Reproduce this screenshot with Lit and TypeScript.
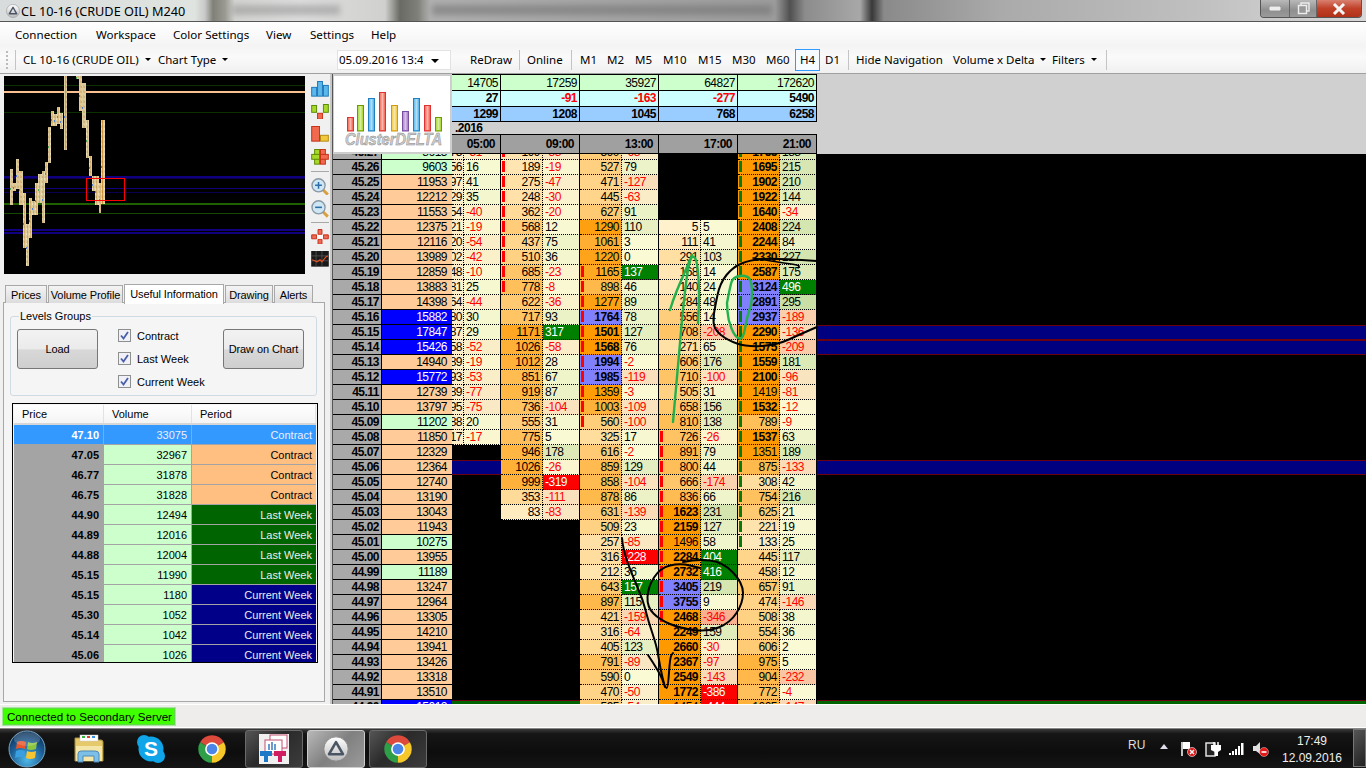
import { LitElement, html, css, svg } from "lit";
import { customElement } from "lit/decorators.js";

const RAW = `45.27|8613|75 -51|199 -88|590 -68|-|1755 188
45.26|9603|56 16|189 -19|527 79|-|1695 215
45.25|11953|97 41|275 -47|471 -127|-|1902 210
45.24|12212|29 35|248 -30|445 -63|-|1922 144
45.23|11553|54 -40|362 -20|627 91|-|1640 -34
45.22|12375|21 -19|568 12|1290 110|5 5|2408 224
45.21|12116|20 -54|437 75|1061 3|111 41|2244 84
45.20|13989|02 -42|510 36|1220 0|291 103|2330 227
45.19|12859|48 -10|685 -23|1165 137g|168 14|2587 175
45.18|13883|81 25|778 -8|898 46|140 24|3124 496g
45.17|14398|64 -44|622 -36|1277 89|284 48|2891 295
45.16|15882|80 30|717 93|1764 78|556 14|2937 -189
45.15|17847|87 29|1171 317g|1501 127|708 -208|2290 -136
45.14|15426|58 -52|1026 -58|1568 76|271 65|1575 -209
45.13|14940|89 -19|1012 28|1994 -2|606 176|1559 181
45.12|15772|93 -53|851 67|1985 -119|710 -100|2100 -96
45.11|12739|89 -77|919 87|1359 -3|505 31|1419 -81
45.10|13797|95 -75|736 -104|1003 -109|658 156|1532 -12
45.09|11202|88 20|555 31|560 -100|810 138|789 -9
45.08|11850|17 -17|775 5|325 17|726 -26|1537 63
45.07|12329|-|946 178|616 -2|891 79|1351 189
45.06|12364|-|1026 -26|859 129|800 44|875 -133
45.05|12740|-|999 -319r|858 -104|666 -174|308 42
45.04|13190|-|353 -111|878 86|836 66|754 216
45.03|13043|-|83 -83|631 -139|1623 231|625 21
45.02|11943|-|-|509 23|2159 127|221 19
45.01|10275|-|-|257 -85|1496 58|133 25
45.00|13955|-|-|316 -228r|2284 404g|445 117
44.99|11189|-|-|212 36|2732 416g|458 12
44.98|13247|-|-|643 157g|3405 219|657 91
44.97|12964|-|-|897 115|3755 9|474 -146
44.96|13305|-|-|421 -159|2468 -346|508 38
44.95|14210|-|-|316 -64|2249 159|554 36
44.94|13941|-|-|405 123|2660 -30|606 2
44.93|13426|-|-|791 -89|2367 -97|975 5
44.92|13318|-|-|590 0|2549 -143|904 -232
44.91|13510|-|-|470 -50|1772 -386r|772 -4
44.90|15012|-|-|595 -54|1454 -444r|1005 -147`;

const ROWS = RAW.split("\n").map((l) => l.split("|"));

const mix = (a: number[], b: number[], t: number) =>
  `rgb(${a.map((v, i) => Math.round(v + (b[i] - v) * t)).join(",")})`;

const volBg = (v: number) => mix([255, 241, 205], [255, 153, 0], Math.min(1, v / 1400));
const deltaBg = (d: number) =>
  d >= 0
    ? mix([250, 250, 212], [196, 220, 160], Math.min(1, d / 330))
    : mix([250, 250, 212], [248, 176, 144], Math.min(1, -d / 330));

const BLUE = [0, 0, 0, 1700, 3000, 2800];

const LEVELS: Record<string, string> = { "45.15": "lv-n", "45.14": "lv-n", "45.06": "lv-n", "44.90": "lv-g" };

function mark(col: number, p: number) {
  if (col === 2 && p >= 45.18) return "m-r";
  if (col === 3 && p <= 45.19 && p >= 45.09) return "m-r";
  if (col === 4 && p <= 45.08 && p >= 44.96) return "m-r";
  if (col === 5 && p >= 45.01) return "m-g";
  return "";
}

const HEAD: [string, string][] = [
  ["14705", "27"], ["17259", "-91"], ["35927", "-163"], ["64827", "-277"], ["172620", "5490"],
];
const HEAD3 = ["1299", "1208", "1045", "768", "6258"];
const TIMES = ["05:00", "09:00", "13:00", "17:00", "21:00"];

const LEVELS_TABLE = [
  ["47.10", "33075", "Contract", "sel"],
  ["47.05", "32967", "Contract", "c"],
  ["46.77", "31878", "Contract", "c"],
  ["46.75", "31828", "Contract", "c"],
  ["44.90", "12494", "Last Week", "l"],
  ["44.89", "12016", "Last Week", "l"],
  ["44.88", "12004", "Last Week", "l"],
  ["45.15", "11990", "Last Week", "l"],
  ["45.15", "1180", "Current Week", "w"],
  ["45.30", "1052", "Current Week", "w"],
  ["45.14", "1042", "Current Week", "w"],
  ["45.06", "1026", "Current Week", "w"],
];

const MENU: [string, number][] = [["Connection", 81], ["Workspace", 77], ["Color Settings", 93], ["View", 44], ["Settings", 61], ["Help", 40]];
const TB: [string, number][] = [
  ["ReDraw", 49], ["|", 8], ["Online", 44], ["|", 9], ["M1", 27], ["M2", 28], ["M5", 28], ["M10", 35],
  ["M15", 34], ["M30", 34], ["M60", 29],
];

const BARS = [
  [10, 13, 169, 205], [13, 16, 183, 191], [16, 19, 159, 189], [19, 23, 171, 205], [23, 26, 193, 248],
  [26, 29, 224, 266], [29, 32, 198, 238], [32, 35, 201, 215], [35, 38, 183, 215], [38, 42, 174, 203],
  [42, 45, 171, 223], [45, 48, 162, 183], [48, 51, 127, 163], [51, 54, 111, 126], [54, 57, 114, 126],
  [57, 60, 107, 124], [60, 63, 113, 129], [64, 67, 76, 150], [76, 79, 76, 79], [79, 82, 76, 111],
  [82, 86, 83, 128], [86, 89, 120, 158], [89, 92, 156, 176], [92, 95, 176, 191], [95, 99, 176, 205],
  [99, 101, 183, 213], [101, 105, 120, 204],
];

const LINES: [number, string, number][] = [
  [85, "#0c3000", 1], [91, "#f8c090", 2], [112, "#0c3000", 1], [176, "#100080", 2], [178, "#0a0050", 1],
  [188, "#100080", 1], [192, "#0a0050", 1], [203, "#206000", 2], [213, "#154a00", 1], [229, "#100080", 2], [232, "#100080", 2],
];

const LOGO: [number, number, string, string][] = [
  [347, 117, "#f4604c", "#d33"], [357, 105, "#a6d82a", "#6a9a00"], [368, 98, "#4fb4ec", "#1e80c0"],
  [379, 92, "#f4604c", "#d33"], [391, 105, "#f2c83c", "#cc9c10"], [402, 111, "#a878c8", "#7a4ea0"],
  [413, 98, "#4fb4ec", "#1e80c0"], [424, 105, "#f4604c", "#d33"], [435, 117, "#a6d82a", "#6a9a00"],
];

const chrome = () => html`<svg class="chrome" viewBox="0 0 48 48">
  <path d="M24 24L43.05 13A22 22 0 0 0 4.95 13Z" fill="#dd4a3c"/>
  <path d="M24 24L4.95 13A22 22 0 0 0 24 46Z" fill="#2f9e48"/>
  <path d="M24 24L24 46A22 22 0 0 0 43.05 13Z" fill="#f6c728"/>
  <circle cx="24" cy="24" r="11" fill="#fff"/><circle cx="24" cy="24" r="8.5" fill="#4a86e8"/>
</svg>`;

const triangleIcon = (cls: string) => html`<svg class=${cls} viewBox="0 0 30 30">
  <defs><linearGradient id="tg" x1="0" y1="0" x2="0" y2="1"><stop offset="0" stop-color="#fff"/><stop offset="1" stop-color="#bbb"/></linearGradient></defs>
  <circle cx="15" cy="15" r="14" fill="url(#tg)" stroke="#888"/>
  <path d="M15 7L23 21H7Z" fill="none" stroke="#4a5564" stroke-width="3" stroke-linejoin="round"/>
</svg>`;

const smooth = (pts: string) => {
  const p = pts.split(" ").map((s) => s.split(",").map(Number));
  let d = `M${p[0][0]} ${p[0][1]}`;
  for (let i = 1; i < p.length - 1; i++) {
    const mx = (p[i][0] + p[i + 1][0]) / 2;
    const my = (p[i][1] + p[i + 1][1]) / 2;
    d += `Q${p[i][0]} ${p[i][1]} ${mx} ${my}`;
  }
  const l = p[p.length - 1];
  return d + `L${l[0]} ${l[1]}`;
};

@customElement("app-root")
export class AppRoot extends LitElement {
  static styles = css`
    :host { display: block; width: 1366px; height: 768px; overflow: hidden; font-family: "Liberation Sans", Arial, sans-serif; font-size: 11px; color: #000; }
    .app { display: flex; flex-direction: column; width: 1366px; height: 768px; background: #f0f0f0; }

    .title { height: 22px; box-sizing: border-box; border-bottom: 1px solid #555; display: flex; align-items: center; position: relative; overflow: hidden;
      background: linear-gradient(90deg, #d8dcdc 0, #dfe4e0 195px, #c8c8c8 205px, #808078 213px, #9a9a92 225px, #d4d4d2 235px, #dedede 300px, #d0d0ce 385px, #6a6a64 400px, #80807a 418px, #b0b0b0 430px, #a8a8a8 560px, #9c9c9c 775px, #505050 790px, #8c8c8c 805px, #a8a8a8 860px, #383838 872px, #8a8a8a 884px, #aaaaaa 1000px, #c0c0c0 1200px, #d8d8d8 1366px); }
    .title svg.ti { width: 14px; height: 14px; margin-left: 6px; flex: none; }
    .title .tt { padding-left: 1px; font: 12.7px "Noto Sans", sans-serif; color: #000; white-space: nowrap; position: relative; }
    .haze { position: absolute; top: 5px; height: 10px; filter: blur(3px); background: #8f8f8f; opacity: .55; }
    .hz1 { left: 232px; width: 108px; }
    .hz2 { left: 432px; width: 340px; background: #6e6e6e; }
    .winbtns { position: absolute; right: 4px; top: 0; display: flex; height: 17px; border: 1px solid #555; border-top: 0; border-radius: 0 0 4px 4px; overflow: hidden; background: #9aa; }
    .winbtns div { display: flex; align-items: center; justify-content: center; height: 17px; border-right: 1px solid #666; }
    .wb-min { width: 28px; background: linear-gradient(#b9b9b9, #8f8f8f 60%, #9a9a9a); }
    .wb-res { width: 26px; background: linear-gradient(#b9b9b9, #8f8f8f 60%, #9a9a9a); }
    .wb-cl { width: 44px; background: linear-gradient(#d88070, #c04028 50%, #b03018); border-right: 0 !important; }

    .menu { height: 24px; display: flex; align-items: center; padding-left: 15px; background: linear-gradient(#fff, #f4f4f4); font: 11.6px "Noto Sans", sans-serif; }
    .menu span { display: block; }

    .toolbar { height: 28px; display: flex; align-items: center; background: linear-gradient(#f4f4f4, #fafafa 40%, #f0f0f0); font: 11.5px "Noto Sans", sans-serif; border-bottom: 1px solid #a0a0a0; box-sizing: border-box; padding-left: 6px; white-space: nowrap; }
    .grip { width: 3px; height: 18px; border-left: 2px dotted #bbb; box-sizing: border-box; }
    .sep { width: 1px; height: 20px; background: #c4c4c4; }
    .grip + .sep { margin: 0 7px 0 6px; }
    .ti-btn { display: flex; align-items: center; gap: 6px; box-sizing: border-box; height: 22px; }
    .car { width: 0; height: 0; border: 3px solid transparent; border-top: 3px solid #000; border-bottom: 0; }
    .date { box-sizing: border-box; width: 114px; height: 20px; background: #fff; border: 1px solid #e2e2e2; display: flex; align-items: center; position: relative; padding-left: 1px; overflow: hidden; }
    .date .dt { width: 84px; overflow: hidden; }
    .date .car { border-width: 4px 4px 0; position: absolute; right: 11px; top: 8px; }
    .tsep { box-sizing: border-box; display: flex; }
    .tsep i { display: block; width: 1px; height: 20px; background: #c4c4c4; }
    .h4 { box-sizing: border-box; width: 25px; height: 22px; border: 1px solid #3399ff; display: flex; align-items: center; justify-content: center; background: #f6fbff; }

    .main { flex: 1; display: flex; min-height: 0; height: 630px; }
    .left { width: 330px; flex: none; display: flex; flex-direction: column; padding-top: 2px; box-sizing: border-box; }
    .topleft { display: flex; height: 198px; padding-left: 4px; }
    .mini { width: 301px; height: 198px; display: block; background: #000; }
    .icons { display: flex; flex-direction: column; padding: 5px 0 0 6px; width: 19px; }
    .icons .ic { width: 18px; height: 16px; margin-bottom: 7px; display: block; }
    .icons .zi { width: 18px; height: 18px; margin-bottom: 5px; display: block; }
    .icons .dv { width: 18px; height: 1px; background: #a8a8a8; margin: -1px 0 6px; }

    .tabs { display: flex; margin: 9px 0 0 5px; height: 20px; align-items: flex-end; gap: 1px; position: relative; z-index: 1; }
    .tab { box-sizing: border-box; height: 18px; border: 1px solid #a8a8a8; border-bottom: 0; background: linear-gradient(#f4f4f4, #dcdcdc); display: flex; align-items: center; justify-content: center; font-size: 11px; letter-spacing: -.1px; padding-top: 1px; white-space: nowrap; }
    .tab.on { height: 20px; background: #fff; padding: 0 0 2px; margin-bottom: -1px; }
    .panel { box-sizing: border-box; margin: -1px 0 0 3px; width: 322px; height: 400px; border: 1px solid #a8a8a8; background: #f5f5f5; padding: 13px 6px 0; }
    .group { position: relative; box-sizing: border-box; width: 307px; height: 80px; border: 1px solid #cfdbe2; border-radius: 3px; display: flex; padding: 12px 0 0 6px; }
    .legend { position: absolute; left: 8px; top: -7px; background: #f5f5f5; padding: 0 1px; font-size: 11px; }
    .btn { box-sizing: border-box; width: 81px; height: 40px; border: 1px solid #777; border-radius: 3px; background: linear-gradient(#f2f2f2, #ebebeb 50%, #d8d8d8 52%, #cfcfcf); display: flex; align-items: center; justify-content: center; font-size: 11px; letter-spacing: -.1px; flex: none; }
    .checks { display: flex; flex-direction: column; gap: 10px; margin: 0 0 0 20px; width: 105px; }
    .chk { display: flex; align-items: center; gap: 6px; height: 13px; font-size: 11px; }
    .chk svg { width: 13px; height: 13px; flex: none; }

    .lt { box-sizing: border-box; width: 306px; height: 260px; margin: 7px 0 0 2px; border: 1px solid #000; padding: 1px; background: #f5f5f5; overflow: hidden; }
    .lh { display: flex; height: 20px; background: linear-gradient(#fff, #f4f4f4); border-bottom: 2px solid #d6d6d6; box-sizing: border-box; font-size: 11px; }
    .lh div { box-sizing: border-box; padding: 3px 0 0 8px; border-right: 1px solid #e2e2e2; }
    .lr { display: flex; height: 20px; box-sizing: border-box; border-bottom: 1px solid #a4a4a4; align-items: center; text-align: right; font-size: 11px; }
    .lr div { box-sizing: border-box; height: 19px; line-height: 20px; padding-right: 4px; border-right: 1px solid #a4a4a4; }
    .c1 { width: 90px; } .c2 { width: 88px; } .c3 { width: 124px; }
    .lr .c1 { background: #a4a4a4; font-weight: 700; padding-right: 4px; }
    .lr .c2 { background: #ccffcc; }
    .lr .c3 { border-right: 0; }
    .lr.c .c3 { background: #ffbf80; }
    .lr.l .c3 { background: #006400; color: #eee; }
    .lr.w .c3 { background: #000088; color: #eee; }
    .lr.sel div { background: #3399ff; color: #eef; }
    .lr.sel .c1 { color: #fff; }

    .split { width: 3px; flex: none; background: #c8c8c8; border-right: 1px solid #555; box-sizing: border-box; }
    .chart { flex: 1; position: relative; background: #000; overflow: hidden; font-size: 12px; letter-spacing: -.5px; }
    .hd { background: #d0d0d0; height: 80px; }
    .hr { display: flex; padding-left: 119px; }
    .hr > div { box-sizing: border-box; text-align: right; padding-right: 2px; border-right: 1px solid #000; border-bottom: 1px solid #000; flex: none; }
    .hr > div.g1 { width: 49px; } .hr > div.g { width: 79px; }
    .r1 { height: 17px; } .r1 > div { background: #ccffcc; height: 17px; line-height: 16px; border-top: 1px solid #000; }
    .r2 { height: 16px; } .r2 > div { background: #ccffff; height: 16px; line-height: 15px; font-weight: 700; }
    .r3 { height: 15px; } .r3 > div { background: #99ccff; height: 15px; line-height: 14px; font-weight: 700; }
    .r4 { height: 12px; font-weight: 700; line-height: 12px; padding-left: 122px; }
    .r5 { height: 20px; } .r5 > div { background: #a0a0a0; height: 20px; line-height: 18px; font-weight: 700; border-top: 1px solid #000; padding-right: 5px; }
    .neg { color: #f00; }

    .rows { height: 550px; overflow: hidden; }
    .row { display: flex; height: 15px; background: #000; width: 100%; }
    .row:first-child { margin-top: -9px; }
    .row.lv-n { background: #000080; box-shadow: inset 0 1px #6c0010, inset 0 -1px #6c0010; }
    .row.lv-g { background: #006400; box-shadow: inset 0 1px #6c0010; }
    .cell { box-sizing: border-box; height: 15px; line-height: 15px; display: flex; white-space: nowrap; overflow: hidden; flex: none; }
    .price { width: 49px; justify-content: flex-end; background: #a9a9a9; font-weight: 700; border-bottom: 1px solid #000; border-right: 1px solid #000; padding-right: 2px; }
    .vol { width: 70px; justify-content: flex-end; border-bottom: 1px solid #000; padding-right: 5px; }
    .v-g { background: #ccffcc; } .v-p { background: #ffcc99; } .v-b { background: #0000ff; color: #fff; }
    .cv { justify-content: flex-end; padding-right: 2px; border-bottom: 1px dotted #000; border-right: 1px dotted #000; position: relative; }
    .cd { padding-left: 2px; border-bottom: 1px dotted #000; border-right: 1px solid #000; }
    .w12 { width: 12px; padding-right: 1px; } .w37 { width: 37px; } .w42 { width: 42px; }
    .emp { height: 15px; flex: none; }
    .bold { font-weight: 700; } .red { color: #f00; }
    .hi { background: #8080ff !important; }
    .dg { background: #008000 !important; color: #fff; }
    .dr { background: #ff0000 !important; color: #fff; }
    .cv.m-r::before, .cv.m-g::before { content: ""; position: absolute; left: 1px; top: 1px; height: 11px; width: 3px; }
    .cv.m-r::before { background: #f00; } .cv.m-g::before { background: #0a7a10; }

    .logo { position: absolute; left: 0; top: 1px; width: 118px; height: 78px; background: #fff; border: 1px solid #ccc; box-sizing: border-box; }
    .logo svg { display: block; width: 116px; height: 76px; letter-spacing: 0; }
    .ink { position: absolute; left: 0; top: 0; width: 1033px; height: 630px; pointer-events: none; }

    .status { height: 24px; background: #efedec; border-top: 1px solid #fff; box-sizing: border-box; padding: 2px 0 0 2px; border-bottom: 1px solid #fff; }
    .conn { box-sizing: border-box; width: 174px; height: 19px; background: #40ff00; border: 1px solid #a4e89a; outline: 1px solid #60d848; outline-offset: -2px; padding-left: 4px; line-height: 17px; font-size: 11.6px; white-space: nowrap; }

    .task { height: 40px; background: linear-gradient(#3a3a3a, #161616 12%, #0d0d0d 60%, #151515); display: flex; align-items: center; position: relative; color: #ddd; border-top: 1px solid #888; box-sizing: border-box; }
    .orb { width: 38px; height: 38px; margin-left: 8px; flex: none; }
    .folder { width: 32px; height: 29px; margin-left: 27px; flex: none; }
    .skype { width: 30px; height: 30px; margin-left: 31px; flex: none; }
    svg.chrome { width: 30px; height: 30px; flex: none; display: block; }
    .pin { margin-left: 31px; }
    .tb { box-sizing: border-box; width: 58px; height: 38px; border: 1px solid #6a6a6a; border-radius: 3px; background: linear-gradient(135deg, #555, #2a2a2a 45%, #3c3c3c); display: flex; align-items: center; justify-content: center; flex: none; margin-left: 4px; }
    .tb.first { margin-left: 18px; }
    .tb.act { background: linear-gradient(135deg, #b8b8b8, #808080 50%, #9a9a9a); border-color: #ccc; margin-left: 4px; }
    .tb svg.app { width: 30px; height: 30px; }
    .tb svg.tri { width: 26px; height: 26px; }
    .clock { position: absolute; left: 1272px; top: 4px; width: 80px; text-align: center; font-size: 12px; line-height: 17px; color: #eee; }
    .ru { position: absolute; left: 1128px; top: 9px; font-size: 12px; }
    .showd { position: absolute; right: 0; top: 0; width: 13px; height: 38px; border: 1px solid #777; background: linear-gradient(135deg, #555, #222); box-sizing: border-box; }
    .tic { position: absolute; top: 12px; display: block; }
  `;

  private miniChart() {
    return svg`
      <defs>
        <pattern id="st" width="3" height="5" patternUnits="userSpaceOnUse">
          <rect width="3" height="5" fill="#dccb9c"/>
          <rect x="0" y="1" width="1" height="2" fill="#cfb078"/>
          <rect x="2" y="3" width="1" height="2" fill="#ecdfba"/>
        </pattern>
      </defs>
      ${LINES.map(([y, c, h]) => svg`<rect x="4" y=${y} width="301" height=${h} fill=${c}/>`)}
      ${BARS.map(([a, b, t, e], i) => svg`
        <rect x=${a} y=${t} width=${b - a} height=${e - t} fill="url(#st)"/>
        <rect x=${a + 1} y=${t} width="1" height=${e - t} fill="#c87a10" opacity=${e - t > 60 ? 0.6 : 0.25}/>
        <rect x=${a} y=${t + ((e - t) * 0.55 | 0)} width="1" height="2" fill=${i % 3 ? "#5880c8" : "#50a050"}/>
      `)}
      <rect x="86.5" y="178.5" width="38" height="22" fill="none" stroke="#f00"/>
    `;
  }

  private sideIcons() {
    const bar = (x: number, y: number, w: number, h: number, f: string, s: string) =>
      svg`<rect x=${x + 0.5} y=${y + 0.5} width=${w - 1} height=${h - 1} fill=${f} stroke=${s}/>`;
    return html`
      <svg class="ic" viewBox="0 0 18 16">${bar(0, 6, 6, 10, "#5cb8ec", "#1c78b8")}${bar(6, 0, 6, 16, "#5cb8ec", "#1c78b8")}${bar(12, 4, 6, 12, "#5cb8ec", "#1c78b8")}</svg>
      <svg class="ic" viewBox="0 0 18 16">${bar(0, 1, 6, 8, "#a6d82a", "#5a8a00")}${bar(12, 0, 6, 9, "#a6d82a", "#5a8a00")}${bar(6, 9, 6, 7, "#f06a50", "#c83018")}</svg>
      <svg class="ic" viewBox="0 0 18 16">${bar(0, 0, 9, 16, "#f06a50", "#c83018")}${bar(9, 9, 9, 7, "#f2c83c", "#b48a10")}</svg>
      <svg class="ic" viewBox="0 0 18 16">${bar(3, 0, 6, 16, "#a6d82a", "#5a8a00")}${bar(0, 5, 9, 6, "#a6d82a", "#5a8a00")}${bar(9, 0, 6, 16, "#f06a50", "#c83018")}${bar(9, 5, 9, 6, "#f06a50", "#c83018")}</svg>
      <div class="dv"></div>
      ${[true, false].map((plus) => html`<svg class="zi" viewBox="0 0 18 18">
        <path d="M12 12L17 17" stroke="#d8a040" stroke-width="3"/>
        <circle cx="7.5" cy="7.5" r="6.7" fill="#cfe6f4" stroke="#8898a4" stroke-width="1.4"/>
        <path d=${plus ? "M4 7.5H11M7.5 4V11" : "M4 7.5H11"} stroke="#2c6fa8" stroke-width="1.6"/>
      </svg>`)}
      <div class="dv"></div>
      <svg class="ic" viewBox="0 0 18 16">
        <path d="M7 .5H11V5.5H7ZM7 10.5H11V15.5H7ZM.5 6H5.5V10H.5ZM12.5 6H17.5V10H12.5Z" fill="#ee6a5a" stroke="#c83018"/>
        <rect x="6" y="6" width="6" height="4" fill="#fff"/>
      </svg>
      <svg class="ic" viewBox="0 0 18 16">
        <rect width="18" height="16" fill="#1a1a1a"/>
        <path d="M0 5H18M0 10H18M5 0V16M11 0V16" stroke="#555" stroke-width=".8"/>
        <path d="M1 9L6 11L9 9L11 11L15 6L17 5" fill="none" stroke="#e05020" stroke-width="1.2"/>
      </svg>`;
  }

  private logo() {
    return html`<svg viewBox="334 76 116 76">
      <defs><linearGradient id="gl" x1="0" x2="1" y1="0" y2="0"><stop offset="0" stop-color="#fff" stop-opacity=".1"/><stop offset=".5" stop-color="#fff" stop-opacity=".55"/><stop offset="1" stop-color="#fff" stop-opacity="0"/></linearGradient></defs>
      ${LOGO.map(([x, y, f, s]) => svg`
        <rect x=${x + 0.5} y=${y + 0.5} width="6" height=${130.5 - y} fill=${f} stroke=${s}/>
        <rect x=${x + 1} y=${y + 1} width="5" height=${129 - y} fill="url(#gl)"/>`)}
      <text x="345" y="145" font-family="Liberation Sans, sans-serif" font-weight="700" font-style="italic" font-size="16.5" fill="#cfcfcf" stroke="#8a8a8a" stroke-width=".5" textLength="97" lengthAdjust="spacingAndGlyphs">ClusterDELTA</text>
    </svg>`;
  }

  private ink() {
    const k = "#000";
    const g = "#22b14c";
    const line = (p: string, c: string, w = 2) =>
      svg`<path d=${smooth(p)} fill="none" stroke=${c} stroke-width=${w} stroke-linejoin="round" stroke-linecap="round"/>`;
    return html`<svg class="ink" viewBox="333 74 1033 630">
      ${line("670,310 673,300 680,283 687,267 692,255 697,260 699,285 699,303 698,323", g, 2.4)}
      ${line("673,422 677,377 680,343 683,308 688,267 692,255", g, 2.4)}
      ${line("727,303 730,287 733,277 747,275 752,283 752,303 747,317 743,340 735,337 728,320 727,303", g, 2.4)}
      ${line("817,261 773,258 750,260 733,267 720,283 715,307 713,320 715,330 727,340 747,347 777,345 803,333 817,327", k)}
      ${line("753,258 775,262 800,265 798,268", k, 1.5)}
      ${line("683,562 697,559 723,562 743,583 743,603 730,623 707,632 680,628 660,620 647,607 648,587 660,568 680,563 700,568", k)}
      ${line("622,538 623,550 633,577 643,600 648,620 657,647 660,667 665,688 668,688 670,657 673,653", k)}
      ${line("648,655 660,673 665,687", k)}
    </svg>`;
  }

  private table() {
    return html`<div class="rows">
      ${ROWS.map((r) => {
        const p = parseFloat(r[0]);
        const v = +r[1];
        const vc = v < 11500 ? "v-g" : v >= 15000 ? "v-b" : "v-p";
        return html`<div class="row ${LEVELS[r[0]] ?? ""}">
          <div class="cell price">${r[0]}</div>
          <div class="cell vol ${vc}">${r[1]}</div>
          ${r.slice(2).map((c, i) => {
            const col = i + 1;
            if (c === "-") return html`<div class="emp" style="width:${col === 1 ? 49 : 79}px"></div>`;
            const [a, b] = c.split(" ");
            const d = parseInt(b);
            const fl = b.endsWith("g") ? "dg" : b.endsWith("r") ? "dr" : "";
            const txt = b.replace(/[gr]$/, "");
            if (col === 1) {
              return html`<div class="cell cv w12" style="background:${mix([255, 241, 205], [255, 220, 150], 0.1)}">${a}</div>
                <div class="cell cd w37 ${d < 0 ? "red" : ""}" style="background:${deltaBg(d)}">${txt}</div>`;
            }
            const n = +a;
            return html`<div class="cell cv w42 ${mark(col, p)} ${n >= 1500 ? "bold" : ""} ${n >= BLUE[col] && BLUE[col] ? "hi" : ""}" style="background:${volBg(n)}">${a}</div>
              <div class="cell cd w37 ${fl} ${d < 0 && !fl ? "red" : ""}" style="background:${deltaBg(d)}">${txt}</div>`;
          })}
        </div>`;
      })}
    </div>`;
  }

  private taskbar() {
    return html`<div class="task">
      <svg class="orb" viewBox="0 0 38 38">
        <defs>
          <radialGradient id="ob" cx=".5" cy=".8" r=".8"><stop offset="0" stop-color="#4fb8e8"/><stop offset=".6" stop-color="#1a5c94"/><stop offset="1" stop-color="#0c2c50"/></radialGradient>
        </defs>
        <circle cx="19" cy="19" r="18" fill="url(#ob)" stroke="#7aa6c4"/>
        <path d="M9 12Q13 10 18 12L17 19Q12 17 8 19Z" fill="#e8562a"/>
        <path d="M20 12Q24 14 29 12L28 19Q23 21 19 19Z" fill="#8cc63f"/>
        <path d="M8 21Q12 19 17 21L16 28Q11 26 7 28Z" fill="#3a9fe0"/>
        <path d="M19 21Q23 23 28 21L27 28Q22 30 18 28Z" fill="#f7c531"/>
        <ellipse cx="19" cy="9" rx="13" ry="7" fill="#fff" opacity=".18"/>
      </svg>
      <svg class="folder" viewBox="0 0 32 29">
        <path d="M2 4H10L12 6H28Q30 6 30 8V27H2Z" fill="#e6c96a" stroke="#a88f40"/>
        <rect x="7" y="1" width="18" height="6" fill="#fff" stroke="#ccc" stroke-width=".5"/>
        <rect x="9" y="2" width="3" height="2" fill="#3cb043"/><rect x="14" y="2" width="3" height="2" fill="#e04030"/><rect x="19" y="2" width="3" height="2" fill="#3a8fe0"/>
        <path d="M3 12H29V27H3Z" fill="#f4e6a8"/>
        <path d="M5 28V20Q5 17 8 17H22Q26 17 26 20V28H21V22H10V28Z" fill="#7cc0e8" stroke="#4c88b8"/>
      </svg>
      <svg class="skype" viewBox="0 0 30 30">
        <circle cx="15" cy="15" r="12.5" fill="#0fa5e8"/><circle cx="8" cy="8" r="7" fill="#0fa5e8"/><circle cx="22" cy="22" r="7" fill="#0fa5e8"/>
        <text x="15" y="22" text-anchor="middle" font-family="Liberation Sans, sans-serif" font-weight="700" font-size="21" fill="#fff">S</text>
      </svg>
      <div class="pin">${chrome()}</div>
      <div class="tb first">
        <svg class="app" viewBox="0 0 30 30">
          <rect x="11" y="1" width="17" height="13" fill="#fff" stroke="#c05070"/><rect x="6" y="6" width="17" height="14" fill="#fff" stroke="#c05070"/>
          <rect x="9" y="10" width="2" height="6" fill="#6a9ad0"/><rect x="12" y="8" width="2" height="8" fill="#6a9ad0"/><rect x="15" y="10" width="2" height="6" fill="#6a9ad0"/>
          <path d="M1 17H13V22H9V28H5V22H1Z" fill="#1e78c8"/><path d="M15 17H27V22H23V28H19V22H15Z" fill="#d01c60"/>
        </svg>
      </div>
      <div class="tb act">${triangleIcon("tri")}</div>
      <div class="tb">${chrome()}</div>

      <span class="ru">RU</span>
      <svg class="tic" style="left:1160px;top:15px" width="8" height="6" viewBox="0 0 8 6"><path d="M0 5L4 0L8 5Z" fill="#dde"/></svg>
      <svg class="tic" style="left:1181px" width="16" height="16" viewBox="0 0 16 16"><path d="M1 1V15" stroke="#fff" stroke-width="1.5"/><path d="M2 1H9V8H2Z" fill="#fff"/><circle cx="11" cy="11" r="4.5" fill="#d81818" stroke="#fff" stroke-width=".6"/><path d="M9 9L13 13M13 9L9 13" stroke="#fff" stroke-width="1.4"/></svg>
      <svg class="tic" style="left:1205px" width="16" height="16" viewBox="0 0 16 16"><rect x="1" y="2" width="9" height="13" fill="#222" stroke="#eee" stroke-width="1.4"/><path d="M9 4V1M13 4V1" stroke="#fff" stroke-width="1.5"/><path d="M6 4H16V9L13 11V15H10V11L6 9Z" fill="#fff"/></svg>
      <svg class="tic" style="left:1229px;top:14px" width="15" height="12" viewBox="0 0 15 12"><path d="M0 10H2V12H0ZM3 8H5V12H3ZM6 6H8V12H6ZM9 3H11V12H9ZM12 0H14.5V12H12Z" fill="#fff"/></svg>
      <svg class="tic" style="left:1253px" width="16" height="16" viewBox="0 0 16 16"><path d="M0 5H3L7 1V13L3 10H0Z" fill="#e0e0e0"/><circle cx="11" cy="11" r="4.5" fill="#e01818" stroke="#fff" stroke-width=".4"/><path d="M8.5 11H13.5" stroke="#fff" stroke-width="1.6"/></svg>
      <div class="clock">17:49<br />12.09.2016</div>
      <div class="showd"></div>
    </div>`;
  }

  render() {
    return html`<div class="app">
      <div class="title">
        <div class="haze hz1"></div><div class="haze hz2"></div>
        ${triangleIcon("ti")}
        <span class="tt">CL 10-16 (CRUDE OIL) M240</span>
        <div class="winbtns">
          <div class="wb-min"><svg width="12" height="5"><rect width="12" height="5" rx="1" fill="#eee" stroke="#555" stroke-width=".6"/></svg></div>
          <div class="wb-res"><svg width="13" height="13"><rect x="4" y="1" width="8" height="8" fill="none" stroke="#eee" stroke-width="1.4"/><rect x="1.5" y="3.5" width="8" height="8" fill="#999" stroke="#eee" stroke-width="1.4"/></svg></div>
          <div class="wb-cl"><svg width="14" height="12"><path d="M2 1L12 11M12 1L2 11" stroke="#f4f4f4" stroke-width="3"/></svg></div>
        </div>
      </div>

      <div class="menu">${MENU.map(([t, w]) => html`<span style="width:${w}px">${t}</span>`)}</div>

      <div class="toolbar">
        <div class="grip"></div><div class="sep"></div>
        <div class="ti-btn" style="width:135px">CL 10-16 (CRUDE OIL)<span class="car"></span></div>
        <div class="ti-btn" style="width:179px">Chart Type<span class="car"></span></div>
        <div class="date"><span class="dt">05.09.2016 13:40</span><span class="car"></span></div>
        <div style="width:19px"></div>
        ${TB.map(([t, w]) =>
          t === "|"
            ? html`<div class="tsep" style="width:${w}px"><i></i></div>`
            : html`<div class="ti-btn" style="width:${w}px">${t}</div>`)}
        <div class="h4">H4</div>
        <div class="ti-btn" style="width:28px;padding-left:5px">D1</div>
        <div class="tsep" style="width:8px"><i></i></div>
        <div class="ti-btn" style="width:97px">Hide Navigation</div>
        <div class="ti-btn" style="width:99px">Volume x Delta<span class="car"></span></div>
        <div class="ti-btn" style="width:54px">Filters<span class="car"></span></div>
        <div class="tsep" style="width:1px"><i></i></div>
      </div>

      <div class="main">
        <div class="left">
          <div class="topleft">
            <svg class="mini" viewBox="4 76 301 198">${this.miniChart()}</svg>
            <div class="icons">${this.sideIcons()}</div>
          </div>
          <div class="tabs">
            <div class="tab" style="width:42px">Prices</div>
            <div class="tab" style="width:75px">Volume Profile</div>
            <div class="tab on" style="width:100px">Useful Information</div>
            <div class="tab" style="width:48px">Drawing</div>
            <div class="tab" style="width:39px">Alerts</div>
          </div>
          <div class="panel">
            <div class="group">
              <span class="legend">Levels Groups</span>
              <div class="btn">Load</div>
              <div class="checks">
                ${["Contract", "Last Week", "Current Week"].map((t) => html`<div class="chk">
                  <svg viewBox="0 0 13 13"><rect x=".5" y=".5" width="12" height="12" fill="#f0f0f8" stroke="#8e8f8f"/><path d="M3 6.5L5.5 9.5L10 3" fill="none" stroke="#4a5fa8" stroke-width="1.8"/></svg>${t}</div>`)}
              </div>
              <div class="btn">Draw on Chart</div>
            </div>
            <div class="lt">
              <div class="lh"><div class="c1">Price</div><div class="c2">Volume</div><div class="c3">Period</div></div>
              ${LEVELS_TABLE.map(([a, b, c, k]) => html`<div class="lr ${k}"><div class="c1">${a}</div><div class="c2">${b}</div><div class="c3">${c}</div></div>`)}
            </div>
          </div>
        </div>
        <div class="split"></div>
        <div class="chart">
          <div class="hd">
            <div class="hr r1">${HEAD.map(([a], i) => html`<div class=${i ? "g" : "g1"}>${a}</div>`)}</div>
            <div class="hr r2">${HEAD.map(([, b], i) => html`<div class="${i ? "g" : "g1"} ${b.startsWith("-") ? "neg" : ""}">${b}</div>`)}</div>
            <div class="hr r3">${HEAD3.map((b, i) => html`<div class=${i ? "g" : "g1"}>${b}</div>`)}</div>
            <div class="r4">.2016</div>
            <div class="hr r5">${TIMES.map((b, i) => html`<div class=${i ? "g" : "g1"}>${b}</div>`)}</div>
          </div>
          ${this.table()}
          <div class="logo">${this.logo()}</div>
          ${this.ink()}
        </div>
      </div>

      <div class="status"><div class="conn">Connected to Secondary Server</div></div>
      ${this.taskbar()}
    </div>`;
  }
}
